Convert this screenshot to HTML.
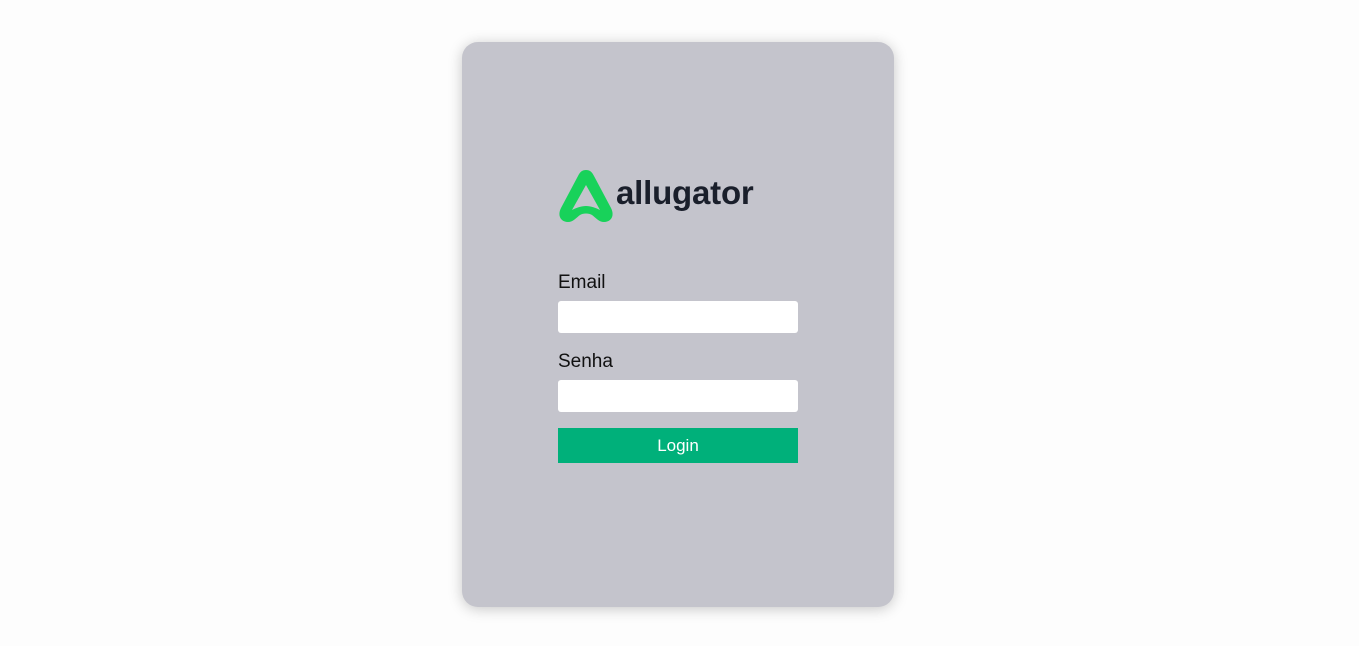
<!DOCTYPE html>
<html><head><style>
body{margin:0;width:1359px;height:646px;background:#fdfdfd;font-family:"Liberation Sans",sans-serif;position:relative;overflow:hidden}
.card{position:absolute;left:462px;top:42px;width:432px;height:565px;background:#c4c4cc;border-radius:16px;box-shadow:0 2px 14px rgba(0,0,0,0.22)}
.logo{position:absolute;left:558px;top:168px}
.word{position:absolute;left:616px;top:174px;font-size:33px;font-weight:bold;color:#1a1f2b;letter-spacing:-0.2px}
.lbl{position:absolute;left:558px;font-size:19px;color:#111}
.inp{position:absolute;left:558px;width:240px;height:32px;background:#fff;border-radius:3px}
.btn{position:absolute;left:558px;top:428px;width:240px;height:35px;background:#00b07a;color:#fff;font-size:17px;text-align:center;line-height:35px}
</style></head><body>
<div class="card"></div>
<svg class="logo" width="58" height="56" viewBox="0 0 58 56">
<path d="M28 2 C24 2 22 4 20 8 L3 40 C-1 48 3 54 10 54 C15 54 18 50 22 47 C25 45 31 45 34 47 C38 50 41 54 46 54 C53 54 57 48 53 40 L36 8 C34 4 32 2 28 2 Z M28 17 L42 42 C38 40 33 38 28 38 C23 38 18 40 14 42 Z" fill="#18d25a" fill-rule="evenodd"/>
</svg>
<div class="word">allugator</div>
<div class="lbl" style="top:272px">Email</div>
<div class="inp" style="top:301px"></div>
<div class="lbl" style="top:351px">Senha</div>
<div class="inp" style="top:380px"></div>
<div class="btn">Login</div>
</body></html>
